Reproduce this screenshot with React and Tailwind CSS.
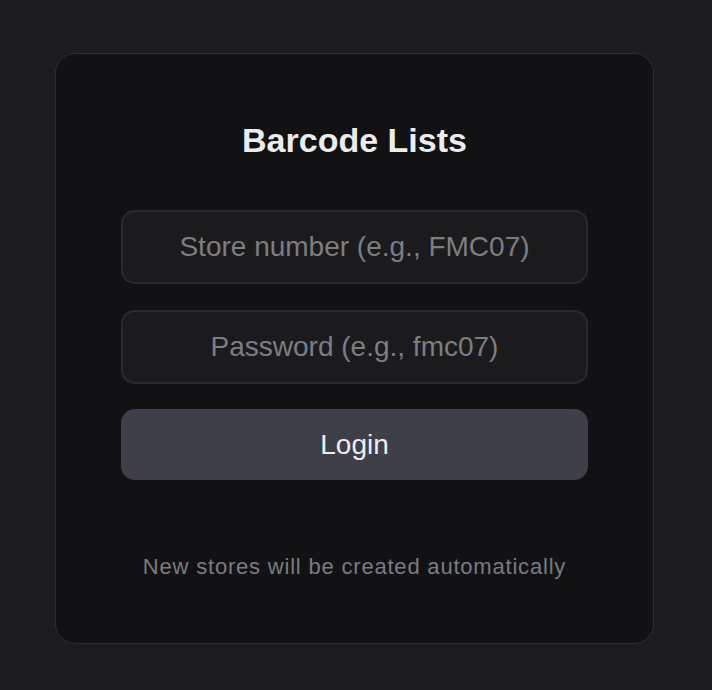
export default function App() {
  return (
    <div
      className="min-h-[690px] w-full bg-[#1c1c1e] pt-[53px] pr-[3px] flex justify-center"
      style={{ fontFamily: '"Liberation Sans", Arial, sans-serif' }}
    >
      <div className="w-[599px] h-[591px] rounded-[20px] border border-[#2e2e32] bg-[#121214] px-[65px] pt-[66px] flex flex-col">
        <h1 className="text-center text-[34px] leading-[40px] font-bold text-[#ececee] mb-[50px]">
          Barcode Lists
        </h1>
        <input
          type="text"
          placeholder="Store number (e.g., FMC07)"
          className="h-[74px] w-full rounded-[14px] border-2 border-[#2a2a2e] bg-[#1b1b1d] text-center text-[28px] text-[#ececee] placeholder:text-[#7d7d84] outline-none mb-[26px]"
        />
        <input
          type="password"
          placeholder="Password (e.g., fmc07)"
          className="h-[74px] w-full rounded-[14px] border-2 border-[#2a2a2e] bg-[#1b1b1d] text-center text-[28px] text-[#ececee] placeholder:text-[#7d7d84] outline-none mb-[25px]"
        />
        <button className="h-[71px] w-full rounded-[14px] bg-[#3f3f47] text-[28px] text-[#ececee]">
          Login
        </button>
        <p className="mt-[74px] text-center text-[22px] leading-[26px] tracking-[0.8px] text-[#7b7b83]">
          New stores will be created automatically
        </p>
      </div>
    </div>
  );
}
